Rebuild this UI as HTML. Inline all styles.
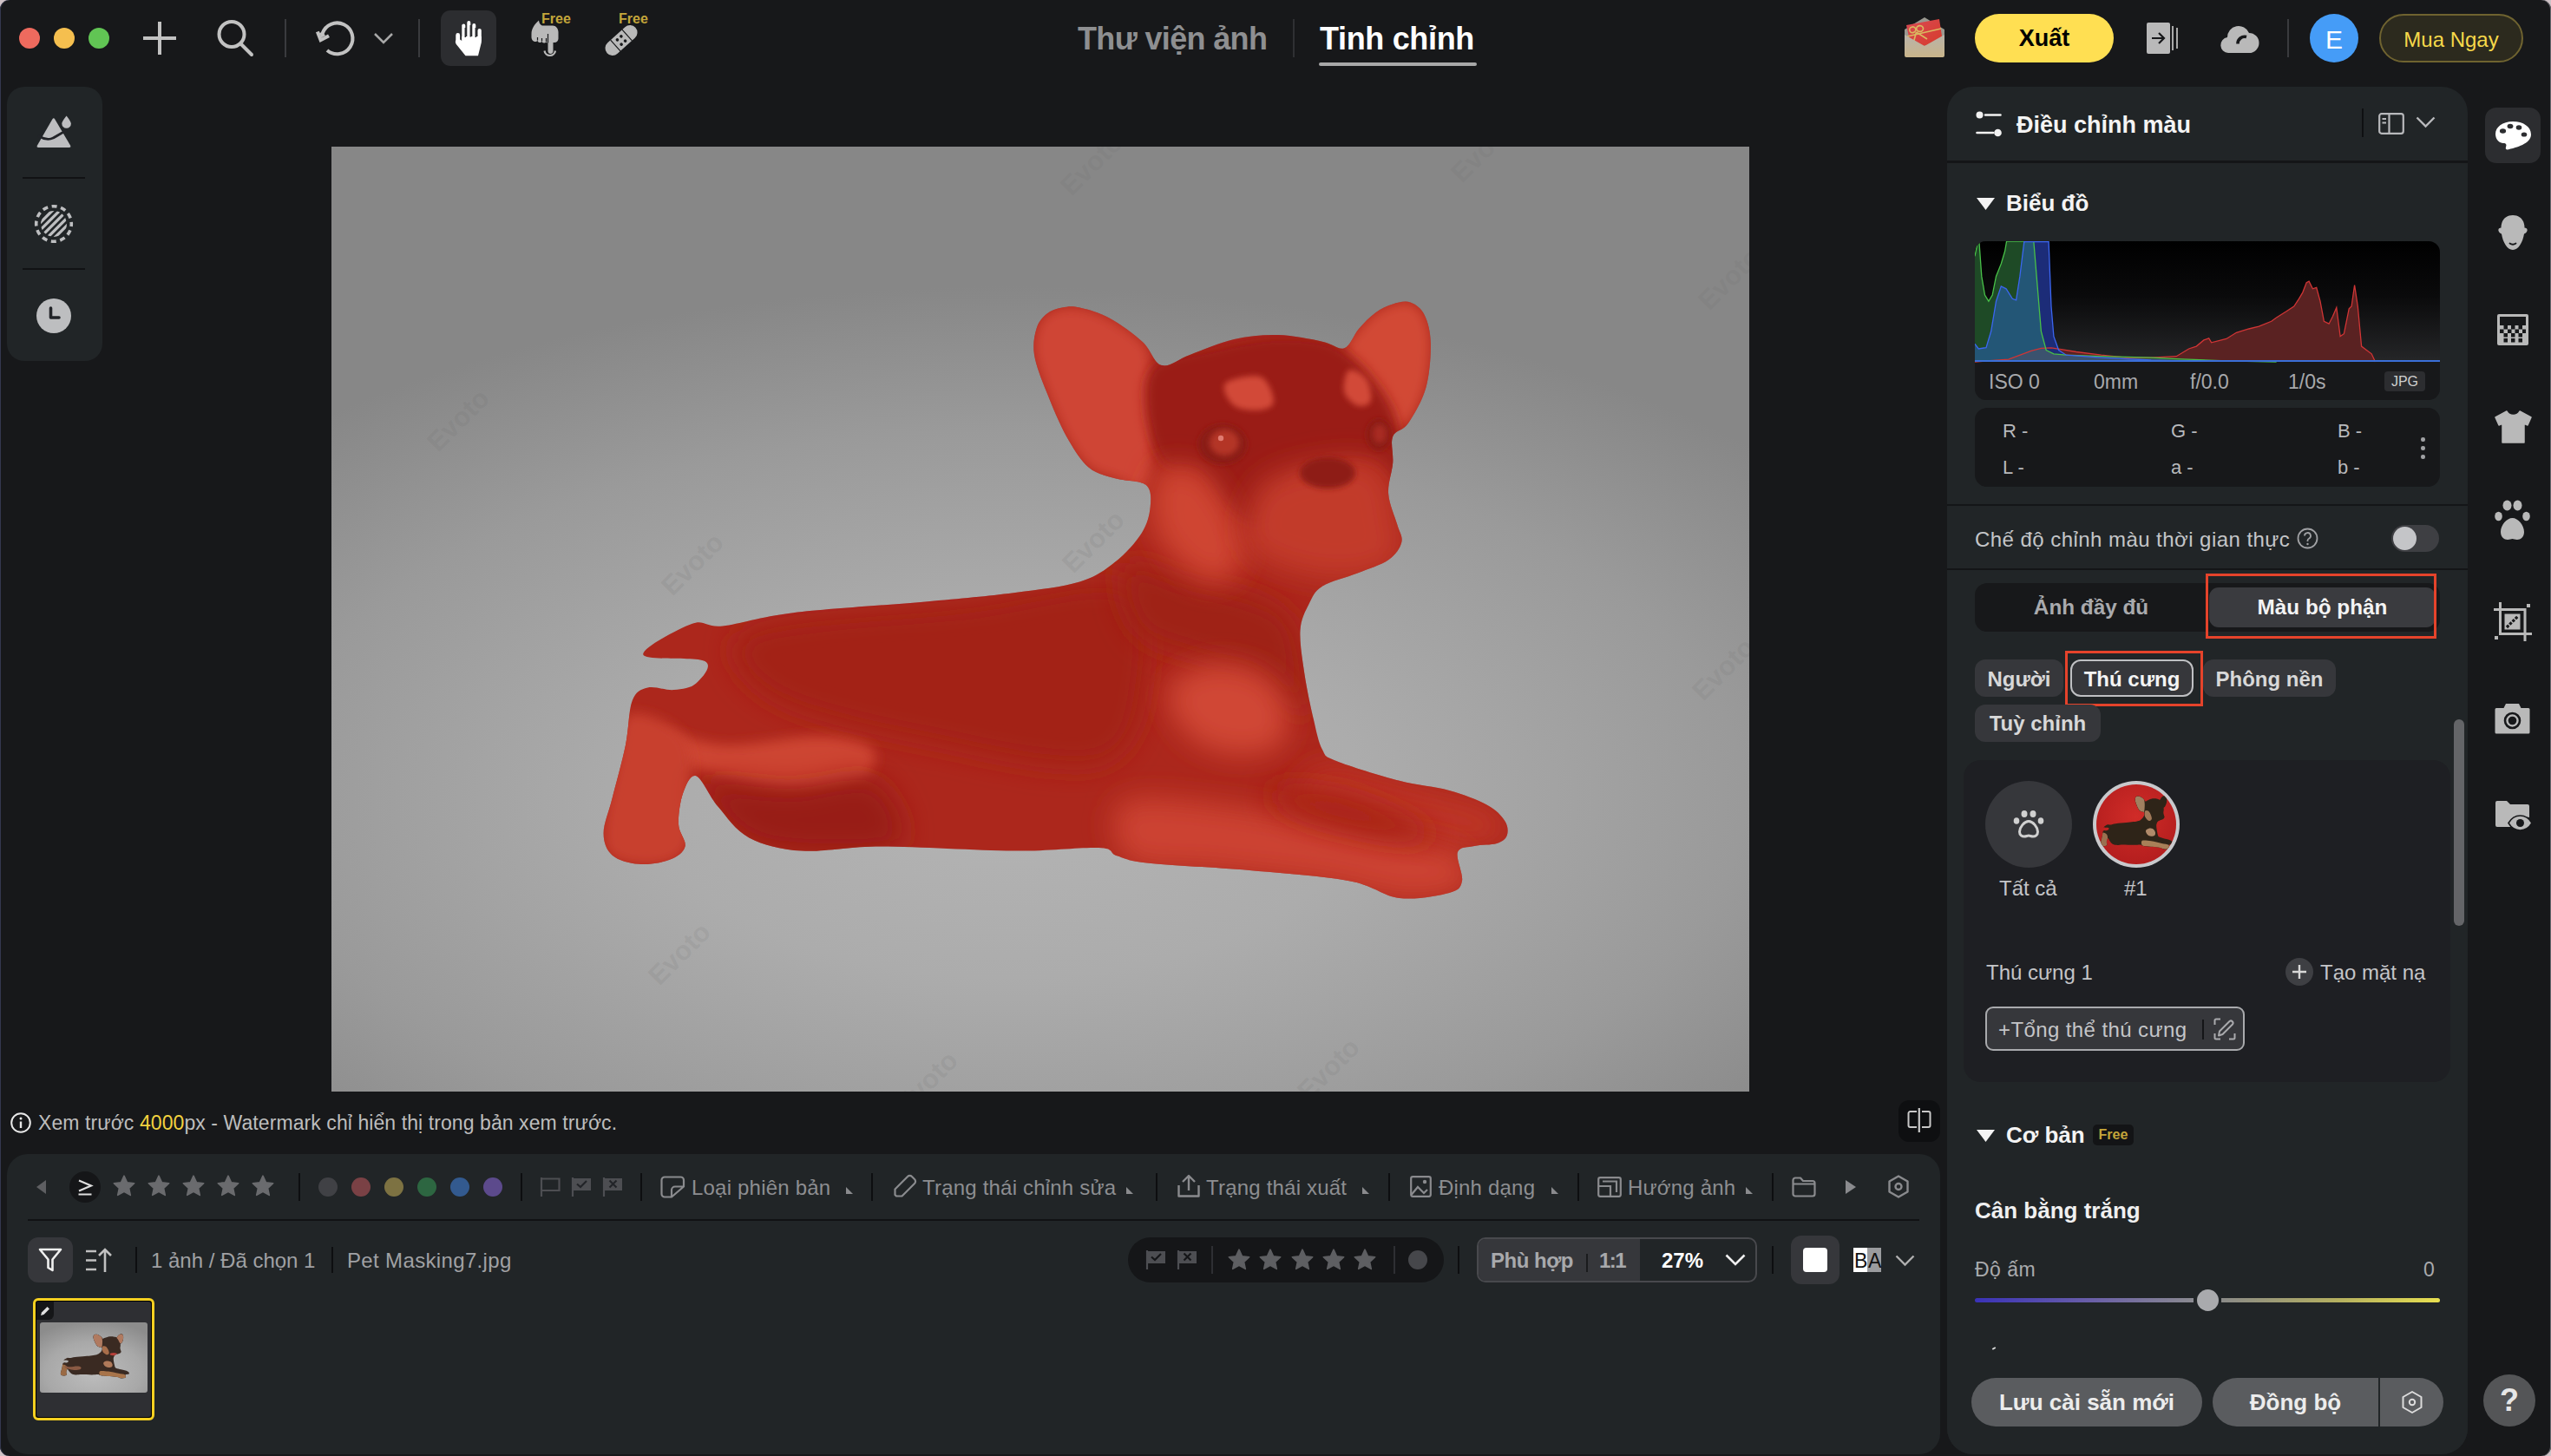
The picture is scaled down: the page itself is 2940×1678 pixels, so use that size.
<!DOCTYPE html>
<html><head><meta charset="utf-8">
<style>
*{box-sizing:border-box;margin:0;padding:0}
html,body{width:2940px;height:1678px;overflow:hidden;background:#cfc2c6}
body{position:relative;font-family:"Liberation Sans",sans-serif;color:#c8c8c8}
.a{position:absolute}
.t{position:absolute;white-space:nowrap;line-height:1}
svg{position:absolute;overflow:visible}
</style></head><body>
<div class="a" style="left:0;top:0;width:2940px;height:1678px;border-radius:11px;background:#17181a;box-shadow:inset 1px 0 0 0 #34384f,inset -1px 0 0 0 #6a6b70"></div>


<!-- ============ TOP BAR ============ -->
<div class="a" style="left:22px;top:32px;width:24px;height:24px;border-radius:50%;background:#ee6a5e"></div>
<div class="a" style="left:62px;top:32px;width:24px;height:24px;border-radius:50%;background:#f5bf4f"></div>
<div class="a" style="left:102px;top:32px;width:24px;height:24px;border-radius:50%;background:#61c554"></div>


<!-- plus -->
<svg style="left:165px;top:25px" width="38" height="38"><path d="M19 0V38M0 19H38" stroke="#c2c2c2" stroke-width="4"/></svg>
<!-- search -->
<svg style="left:247px;top:22px" width="48" height="46"><circle cx="20" cy="17.5" r="14.5" fill="none" stroke="#c2c2c2" stroke-width="4"/><path d="M31 29L43 41" stroke="#c2c2c2" stroke-width="4" stroke-linecap="round"/></svg>
<div class="a" style="left:328px;top:22px;width:2px;height:44px;background:#3a3b3e"></div>
<!-- undo -->
<svg style="left:362px;top:20px" width="50" height="48"><path d="M9.6 18.5A17.9 17.9 0 1 1 15 38" fill="none" stroke="#c2c2c2" stroke-width="4.1"/><path d="M3.9 16.6L7.6 26.2L17 21.2" fill="none" stroke="#c2c2c2" stroke-width="4.1" stroke-linejoin="miter"/><path d="M6 18L8.5 23.5L13 21L10 17Z" fill="#c2c2c2"/></svg>
<svg style="left:431px;top:38px" width="22" height="13"><path d="M1 1L11 11L21 1" fill="none" stroke="#a8a8a8" stroke-width="2.5"/></svg>
<div class="a" style="left:482px;top:22px;width:2px;height:44px;background:#3a3b3e"></div>
<!-- hand button -->
<div class="a" style="left:508px;top:12px;width:64px;height:64px;border-radius:11px;background:#2c2d30"></div>
<svg style="left:524px;top:23px" width="33" height="42" viewBox="0 0 33 42"><g fill="#fff"><rect x="8.3" y="4.4" width="4" height="20" rx="2"/><rect x="14.3" y="0.9" width="4" height="22" rx="2"/><rect x="20.3" y="3.9" width="4" height="20" rx="2"/><rect x="26.5" y="9.9" width="4.3" height="16" rx="2.1"/><path d="M8.3 19H30.8V26L27 41.2H12.5L1.8 28C0.8 26.5 0.6 25 1.3 23V17.5a2.4 2.4 0 0 1 4.8 0V22.5L8.3 24Z"/></g><path d="M12.3 9V20M18.3 6V19.5M24.3 9V20" stroke="#2c2d30" stroke-width="1.5"/></svg>
<!-- pointing hand -->
<svg style="left:612px;top:23px" width="33" height="43" viewBox="0 0 33 43"><path d="M0.5 16C0.5 10 4 5 9 0.5C9.5 4 11 6.5 14 6.5H25C28.5 6.5 31.5 10 31.5 14V21.5C31.5 24 29.5 26 27 26H25.5V36C25.5 38 24 39 22.5 39S19.5 38 19.5 36V26.5C18.5 26.5 18 26 17.5 25C17 26 16 26.5 15 26.5C13.5 26.5 12.5 25.5 12.5 24.5C12 25.5 11 26 10 26C8.5 26 7.5 25 7.5 23.5C7 24.5 6 25 5 25C3 25 0.5 23 0.5 20Z" fill="#b9b9b9"/><path d="M19.5 16V26.5M7.5 20V23.5M12.5 21V24.5M17.5 21V25" stroke="#17181a" stroke-width="1.2"/><path d="M15.5 35.5A6.3 6.3 0 0 0 28 35.5" fill="none" stroke="#b9b9b9" stroke-width="2.2"/></svg>
<div class="t" style="left:624px;top:13.5px;font-size:16px;font-weight:bold;color:#c4a63a">Free</div>
<!-- bandage -->
<svg style="left:696px;top:29px" width="40" height="35" viewBox="0 0 40 35"><g transform="rotate(-42 20 17.5)"><rect x="-2" y="9" width="44" height="17" rx="8.5" fill="#b9b9b9"/><path d="M11 9V26M29 9V26" stroke="#17181a" stroke-width="1.2"/><circle cx="17" cy="14" r="1.8" fill="#17181a"/><circle cx="23" cy="14" r="1.8" fill="#17181a"/><circle cx="17" cy="21" r="1.8" fill="#17181a"/><circle cx="23" cy="21" r="1.8" fill="#17181a"/></g></svg>
<div class="t" style="left:713px;top:13.5px;font-size:16px;font-weight:bold;color:#c4a63a">Free</div>

<!-- center tabs -->
<div class="t" style="left:1242px;top:27px;font-size:36px;letter-spacing:-0.65px;font-weight:bold;color:#8e8f91">Thư viện ảnh</div>
<div class="a" style="left:1490px;top:22px;width:2px;height:44px;background:#2f3033"></div>
<div class="t" style="left:1521px;top:27px;font-size:36px;letter-spacing:-0.33px;font-weight:bold;color:#ffffff">Tinh chỉnh</div>
<div class="a" style="left:1520px;top:72px;width:182px;height:4px;border-radius:2px;background:#a8a8a8"></div>

<!-- gift -->
<svg style="left:2193px;top:20px" width="50" height="46" viewBox="0 0 50 46">
<defs><linearGradient id="env" x1="0" y1="0" x2="0" y2="1"><stop offset="0" stop-color="#b8b3aa"/><stop offset="1" stop-color="#c9b48a"/></linearGradient>
<linearGradient id="card" x1="0" y1="0" x2="1" y2="1"><stop offset="0" stop-color="#d94a55"/><stop offset="1" stop-color="#d63a28"/></linearGradient></defs>
<path d="M2 14L25 0L48 14V44H2Z" fill="#9a9890"/>
<path d="M4 9L42 2L46 28L10 36Z" fill="url(#card)"/>
<path d="M5 22L44 13M15.5 17L12.5 28M15.5 17L28 25" stroke="#d9b860" stroke-width="1.7" fill="none"/><ellipse cx="11.3" cy="14.3" rx="3.6" ry="3.3" fill="none" stroke="#d9b860" stroke-width="1.7" transform="rotate(-20 11.3 14.3)"/><ellipse cx="19.6" cy="13" rx="3.9" ry="3.4" fill="none" stroke="#d9b860" stroke-width="1.7" transform="rotate(-10 19.6 13)"/>
<path d="M2 20L25 33L48 20V44a2 2 0 0 1-2 2H4a2 2 0 0 1-2-2Z" fill="url(#env)"/>
</svg>
<!-- Xuat -->
<div class="a" style="left:2276px;top:16px;width:160px;height:56px;border-radius:28px;background:#ffdf52"></div>
<div class="t" style="left:2276px;top:31px;width:160px;text-align:center;font-size:27px;font-weight:bold;color:#000">Xuất</div>
<!-- export icon -->
<svg style="left:2474px;top:26px" width="37" height="37" viewBox="0 0 37 37"><rect x="0" y="0" width="27" height="36" rx="2" fill="#b9b9b9"/><path d="M30 4V32M35 6V30" stroke="#b9b9b9" stroke-width="1.8"/><path d="M6 18H20M14 12L20 18L14 24" fill="none" stroke="#17181a" stroke-width="2.2"/></svg>
<!-- cloud -->
<svg style="left:2559px;top:28px" width="43" height="33" viewBox="0 0 43 33"><path d="M9 33a9 9 0 0 1-1-17.9A13 13 0 0 1 33 10a11.5 11.5 0 0 1 0 23Z" fill="#b9b9b9"/><path d="M20 22.5A8 8 0 0 1 30 14.5" fill="none" stroke="#17181a" stroke-width="3.6"/></svg>
<div class="a" style="left:2636px;top:22px;width:2px;height:44px;background:#3a3b3e"></div>
<div class="a" style="left:2662px;top:16px;width:56px;height:56px;border-radius:50%;background:#459cf7"></div>
<div class="t" style="left:2662px;top:31px;width:56px;text-align:center;font-size:30px;color:#fff">E</div>
<div class="a" style="left:2742px;top:16px;width:166px;height:56px;border-radius:28px;background:#2c2a1e;border:2px solid #6f6330"></div>
<div class="t" style="left:2742px;top:34px;width:166px;text-align:center;font-size:24px;color:#f5d84a">Mua Ngay</div>



<!-- ============ LEFT TOOL PANEL ============ -->
<div class="a" style="left:8px;top:100px;width:110px;height:316px;border-radius:20px;background:#212527"></div>
<svg style="left:42px;top:133px" width="41" height="38" viewBox="0 0 41 38"><path d="M18.3 4.5Q19.8 2 21.3 4.5L39 34.5Q40.3 37 37.5 37H2.5Q-0.3 37 1 34.5Z" fill="#bdbec0"/><path d="M3 24C7 26.5 11.5 28 16.5 27S25 21.5 34 18" fill="none" stroke="#222428" stroke-width="2.8" stroke-linecap="round"/><path d="M34.6 0.5C32 4 29.3 7.5 29.3 9.5a5.3 5.3 0 0 0 10.6 0C39.9 7.5 37.2 4 34.6 0.5Z" fill="#bdbec0"/></svg>
<div class="a" style="left:26px;top:204px;width:72px;height:2px;background:#111214"></div>
<svg style="left:40px;top:236px" width="44" height="44" viewBox="0 0 44 44"><circle cx="22" cy="22" r="20.3" fill="none" stroke="#bdbec0" stroke-width="3.6" stroke-dasharray="6.1 4.53" stroke-dashoffset="3.05"/><clipPath id="cc"><circle cx="22" cy="22" r="15"/></clipPath><g clip-path="url(#cc)" stroke="#bdbec0" stroke-width="3.3"><path d="M0 27.03L27.03 0M0 35.51L35.51 0M0 44.00L44.00 0M0 52.49L52.49 0M0 60.97L60.97 0"/></g></svg>
<div class="a" style="left:26px;top:309px;width:72px;height:2px;background:#111214"></div>
<svg style="left:42px;top:344px" width="40" height="40" viewBox="0 0 40 40"><circle cx="20" cy="20" r="20" fill="#bdbec0"/><path d="M16.5 11V22H26" fill="none" stroke="#222428" stroke-width="3.6" stroke-linecap="round" stroke-linejoin="round"/></svg>




<!-- ============ IMAGE ============ -->
<svg style="left:382px;top:169px;overflow:hidden" width="1634" height="1089" viewBox="382 169 1634 1089">
<defs>
<radialGradient id="bg" gradientUnits="userSpaceOnUse" cx="1160" cy="920" r="1180" gradientTransform="translate(1160 920) scale(1 0.5) translate(-1160 -920)">
<stop offset="0" stop-color="#b4b4b4"/><stop offset="0.35" stop-color="#acacac"/><stop offset="0.72" stop-color="#9a9a9a"/><stop offset="1" stop-color="#878787"/></radialGradient>
<filter id="bl" x="-50%" y="-50%" width="200%" height="200%"><feGaussianBlur stdDeviation="16"/></filter>
<filter id="bl2" x="-50%" y="-50%" width="200%" height="200%"><feGaussianBlur stdDeviation="7"/></filter>
<filter id="bl3" x="-50%" y="-50%" width="200%" height="200%"><feGaussianBlur stdDeviation="3"/></filter>
<clipPath id="dog"><path d="M741.3 754.5 C738.8 747.3 782.0 724.4 797.2 718.9 C812.4 713.4 813.3 723.6 832.8 721.4 C852.3 719.3 875.1 710.9 914.1 706.2 C953.0 701.5 1024.2 697.3 1066.5 693.5 C1108.9 689.7 1138.5 687.1 1168.2 683.3 C1197.8 679.5 1224.9 676.6 1244.4 670.6 C1263.9 664.7 1273.2 657.1 1285.0 647.8 C1296.9 638.4 1308.7 625.3 1315.5 614.7 C1322.3 604.1 1324.8 593.6 1325.7 584.2 C1326.5 574.9 1327.4 564.3 1320.6 558.8 C1313.8 553.3 1296.0 554.6 1285.0 551.2 C1274.0 547.8 1263.9 546.6 1254.5 538.5 C1245.2 530.5 1237.2 517.3 1229.1 502.9 C1221.1 488.5 1212.5 467.8 1206.3 452.1 C1200.1 436.5 1194.0 421.2 1192.0 408.9 C1190.1 396.6 1192.2 386.3 1194.6 378.4 C1197.0 370.6 1201.4 365.6 1206.3 361.7 C1211.2 357.7 1217.7 355.7 1224.1 354.6 C1230.4 353.4 1235.2 352.5 1244.4 354.6 C1253.5 356.6 1266.8 360.1 1278.9 366.8 C1291.0 373.4 1307.1 385.1 1317.0 394.2 C1327.0 403.3 1329.8 418.7 1338.9 421.1 C1348.0 423.6 1357.5 413.9 1371.4 408.9 C1385.3 403.9 1405.3 395.0 1422.2 391.1 C1439.2 387.3 1456.1 385.6 1473.0 386.1 C1490.0 386.5 1511.2 391.1 1523.9 393.7 C1536.6 396.2 1542.2 403.8 1549.3 401.3 C1556.3 398.8 1560.1 385.7 1566.0 378.9 C1572.0 372.2 1578.3 365.4 1584.8 360.7 C1591.4 355.9 1598.4 352.5 1605.2 350.5 C1611.9 348.5 1619.4 346.3 1625.5 348.5 C1631.6 350.6 1637.9 355.2 1641.8 363.2 C1645.7 371.2 1648.6 382.2 1648.9 396.2 C1649.1 410.2 1647.6 431.8 1643.3 447.0 C1639.0 462.3 1629.3 478.4 1623.0 487.7 C1616.6 497.0 1608.1 495.3 1605.2 502.9 C1602.2 510.6 1606.0 522.4 1605.2 533.4 C1604.3 544.4 1599.2 557.1 1600.1 569.0 C1600.9 580.9 1607.7 595.3 1610.3 604.6 C1612.8 613.9 1617.0 618.1 1615.3 624.9 C1613.6 631.7 1608.6 639.3 1600.1 645.2 C1591.6 651.1 1577.2 655.4 1564.5 660.5 C1551.8 665.5 1533.2 669.8 1523.9 675.7 C1514.5 681.6 1512.9 687.6 1508.6 696.0 C1504.4 704.5 1499.3 713.0 1498.5 726.5 C1497.6 740.1 1501.0 760.4 1503.5 777.3 C1506.1 794.3 1510.3 813.8 1513.7 828.2 C1517.1 842.6 1519.5 855.6 1523.9 863.7 C1528.3 871.9 1525.3 870.9 1540.1 876.9 C1554.9 883.0 1591.1 894.1 1612.8 899.8 C1634.5 905.5 1653.4 906.3 1670.2 911.0 C1687.1 915.6 1703.2 921.9 1713.9 927.8 C1724.6 933.6 1730.4 940.2 1734.2 946.0 C1738.1 951.9 1738.3 958.5 1736.8 962.8 C1735.3 967.1 1731.4 969.9 1725.1 972.0 C1718.8 974.0 1706.7 973.3 1699.2 975.0 C1691.6 976.7 1682.2 975.4 1679.9 982.1 C1677.5 988.8 1686.6 1007.4 1685.0 1015.2 C1683.3 1022.9 1682.2 1025.6 1670.2 1028.9 C1658.2 1032.2 1632.0 1037.3 1612.8 1035.0 C1593.6 1032.7 1583.7 1020.5 1554.9 1015.2 C1526.1 1009.8 1478.5 1006.3 1440.0 1003.0 C1401.6 999.6 1349.7 997.6 1324.2 994.8 C1298.7 992.0 1296.7 989.2 1287.1 986.2 C1277.4 983.2 1286.0 978.0 1266.2 977.0 C1246.4 976.1 1209.9 980.9 1168.2 980.6 C1126.4 980.3 1056.4 975.5 1015.7 975.5 C975.1 975.5 949.6 982.3 924.2 980.6 C898.8 978.9 879.4 973.8 863.3 965.4 C847.2 956.9 837.9 941.6 827.7 929.8 C817.5 917.9 809.1 896.8 802.3 894.2 C795.5 891.7 790.4 905.2 787.0 914.5 C783.7 923.9 781.5 940.0 782.0 950.1 C782.4 960.3 791.3 968.7 789.6 975.5 C787.9 982.3 780.7 987.4 771.8 990.8 C762.9 994.2 747.2 996.7 736.2 995.8 C725.2 995.0 712.5 991.6 705.7 985.7 C699.0 979.8 695.6 971.3 695.6 960.3 C695.6 949.3 701.5 936.6 705.7 919.6 C710.0 902.7 717.2 877.3 721.0 858.6 C724.8 840.0 724.4 818.8 728.6 807.8 C732.8 796.8 738.3 794.7 746.4 792.6 C754.4 790.5 767.6 796.0 776.9 795.1 C786.2 794.3 796.4 793.0 802.3 787.5 C808.2 782.0 822.6 767.6 812.4 762.1 C802.3 756.6 743.8 761.7 741.3 754.5Z"/></clipPath>
</defs>
<rect x="382" y="169" width="1634" height="1089" fill="url(#bg)"/>
<g font-family="Liberation Sans" font-weight="bold" font-size="31" fill="#6a6a6a" fill-opacity="0.15">
<text transform="translate(505,522) rotate(-45)">Evoto</text>
<text transform="translate(775,688) rotate(-45)">Evoto</text>
<text transform="translate(1237,662) rotate(-45)">Evoto</text>
<text transform="translate(1235,227) rotate(-45)">Evoto</text>
<text transform="translate(1970,359) rotate(-45)">Evoto</text>
<text transform="translate(1963,809) rotate(-45)">Evoto</text>
<text transform="translate(760,1137) rotate(-45)">Evoto</text>
<text transform="translate(1045,1285) rotate(-45)">Evoto</text>
<text transform="translate(1508,1270) rotate(-45)">Evoto</text>
<text transform="translate(1685,212) rotate(-45)">Evoto</text>
</g>
<defs><path id="dogp" d="M741.3 754.5 C738.8 747.3 782.0 724.4 797.2 718.9 C812.4 713.4 813.3 723.6 832.8 721.4 C852.3 719.3 875.1 710.9 914.1 706.2 C953.0 701.5 1024.2 697.3 1066.5 693.5 C1108.9 689.7 1138.5 687.1 1168.2 683.3 C1197.8 679.5 1224.9 676.6 1244.4 670.6 C1263.9 664.7 1273.2 657.1 1285.0 647.8 C1296.9 638.4 1308.7 625.3 1315.5 614.7 C1322.3 604.1 1324.8 593.6 1325.7 584.2 C1326.5 574.9 1327.4 564.3 1320.6 558.8 C1313.8 553.3 1296.0 554.6 1285.0 551.2 C1274.0 547.8 1263.9 546.6 1254.5 538.5 C1245.2 530.5 1237.2 517.3 1229.1 502.9 C1221.1 488.5 1212.5 467.8 1206.3 452.1 C1200.1 436.5 1194.0 421.2 1192.0 408.9 C1190.1 396.6 1192.2 386.3 1194.6 378.4 C1197.0 370.6 1201.4 365.6 1206.3 361.7 C1211.2 357.7 1217.7 355.7 1224.1 354.6 C1230.4 353.4 1235.2 352.5 1244.4 354.6 C1253.5 356.6 1266.8 360.1 1278.9 366.8 C1291.0 373.4 1307.1 385.1 1317.0 394.2 C1327.0 403.3 1329.8 418.7 1338.9 421.1 C1348.0 423.6 1357.5 413.9 1371.4 408.9 C1385.3 403.9 1405.3 395.0 1422.2 391.1 C1439.2 387.3 1456.1 385.6 1473.0 386.1 C1490.0 386.5 1511.2 391.1 1523.9 393.7 C1536.6 396.2 1542.2 403.8 1549.3 401.3 C1556.3 398.8 1560.1 385.7 1566.0 378.9 C1572.0 372.2 1578.3 365.4 1584.8 360.7 C1591.4 355.9 1598.4 352.5 1605.2 350.5 C1611.9 348.5 1619.4 346.3 1625.5 348.5 C1631.6 350.6 1637.9 355.2 1641.8 363.2 C1645.7 371.2 1648.6 382.2 1648.9 396.2 C1649.1 410.2 1647.6 431.8 1643.3 447.0 C1639.0 462.3 1629.3 478.4 1623.0 487.7 C1616.6 497.0 1608.1 495.3 1605.2 502.9 C1602.2 510.6 1606.0 522.4 1605.2 533.4 C1604.3 544.4 1599.2 557.1 1600.1 569.0 C1600.9 580.9 1607.7 595.3 1610.3 604.6 C1612.8 613.9 1617.0 618.1 1615.3 624.9 C1613.6 631.7 1608.6 639.3 1600.1 645.2 C1591.6 651.1 1577.2 655.4 1564.5 660.5 C1551.8 665.5 1533.2 669.8 1523.9 675.7 C1514.5 681.6 1512.9 687.6 1508.6 696.0 C1504.4 704.5 1499.3 713.0 1498.5 726.5 C1497.6 740.1 1501.0 760.4 1503.5 777.3 C1506.1 794.3 1510.3 813.8 1513.7 828.2 C1517.1 842.6 1519.5 855.6 1523.9 863.7 C1528.3 871.9 1525.3 870.9 1540.1 876.9 C1554.9 883.0 1591.1 894.1 1612.8 899.8 C1634.5 905.5 1653.4 906.3 1670.2 911.0 C1687.1 915.6 1703.2 921.9 1713.9 927.8 C1724.6 933.6 1730.4 940.2 1734.2 946.0 C1738.1 951.9 1738.3 958.5 1736.8 962.8 C1735.3 967.1 1731.4 969.9 1725.1 972.0 C1718.8 974.0 1706.7 973.3 1699.2 975.0 C1691.6 976.7 1682.2 975.4 1679.9 982.1 C1677.5 988.8 1686.6 1007.4 1685.0 1015.2 C1683.3 1022.9 1682.2 1025.6 1670.2 1028.9 C1658.2 1032.2 1632.0 1037.3 1612.8 1035.0 C1593.6 1032.7 1583.7 1020.5 1554.9 1015.2 C1526.1 1009.8 1478.5 1006.3 1440.0 1003.0 C1401.6 999.6 1349.7 997.6 1324.2 994.8 C1298.7 992.0 1296.7 989.2 1287.1 986.2 C1277.4 983.2 1286.0 978.0 1266.2 977.0 C1246.4 976.1 1209.9 980.9 1168.2 980.6 C1126.4 980.3 1056.4 975.5 1015.7 975.5 C975.1 975.5 949.6 982.3 924.2 980.6 C898.8 978.9 879.4 973.8 863.3 965.4 C847.2 956.9 837.9 941.6 827.7 929.8 C817.5 917.9 809.1 896.8 802.3 894.2 C795.5 891.7 790.4 905.2 787.0 914.5 C783.7 923.9 781.5 940.0 782.0 950.1 C782.4 960.3 791.3 968.7 789.6 975.5 C787.9 982.3 780.7 987.4 771.8 990.8 C762.9 994.2 747.2 996.7 736.2 995.8 C725.2 995.0 712.5 991.6 705.7 985.7 C699.0 979.8 695.6 971.3 695.6 960.3 C695.6 949.3 701.5 936.6 705.7 919.6 C710.0 902.7 717.2 877.3 721.0 858.6 C724.8 840.0 724.4 818.8 728.6 807.8 C732.8 796.8 738.3 794.7 746.4 792.6 C754.4 790.5 767.6 796.0 776.9 795.1 C786.2 794.3 796.4 793.0 802.3 787.5 C808.2 782.0 822.6 767.6 812.4 762.1 C802.3 756.6 743.8 761.7 741.3 754.5Z"/></defs><use href="#dogp" fill="#ac271c"/>
<g clip-path="url(#dog)">
<path d="M863.3 726.5 C901.4 708.7 1045.4 704.5 1117.3 696.0 C1189.3 687.6 1261.3 662.2 1295.2 675.7 C1329.1 689.3 1324.8 743.5 1320.6 777.3 C1316.4 811.2 1312.1 866.3 1269.8 879.0 C1227.4 891.7 1130.0 866.3 1066.5 853.6 C1003.0 840.9 922.5 823.9 888.7 802.7 C854.8 781.6 825.2 744.3 863.3 726.5Z" fill="#a32118" filter="url(#bl)"/>
<path d="M1295.2 650.3 C1305.4 641.0 1345.2 663.9 1371.4 670.6 C1397.7 677.4 1432.4 681.6 1452.7 691.0 C1473.0 700.3 1484.9 703.7 1493.4 726.5 C1501.8 749.4 1510.3 819.7 1503.5 828.2 C1496.8 836.6 1473.0 789.2 1452.7 777.3 C1432.4 765.5 1405.3 765.5 1381.6 757.0 C1357.9 748.5 1324.8 744.3 1310.4 726.5 C1296.0 708.7 1285.0 659.6 1295.2 650.3Z" fill="#9f2017" filter="url(#bl)"/>
<path d="M1192.0 408.9 C1190.1 396.6 1192.2 386.3 1194.6 378.4 C1197.0 370.6 1201.4 365.6 1206.3 361.7 C1211.2 357.7 1217.7 355.7 1224.1 354.6 C1230.4 353.4 1235.2 352.5 1244.4 354.6 C1253.5 356.6 1266.8 360.1 1278.9 366.8 C1291.0 373.4 1309.3 385.9 1317.0 394.2 C1324.8 402.5 1323.4 403.5 1325.7 416.5 C1328.0 429.6 1331.6 448.7 1330.8 472.4 C1329.9 496.2 1328.2 545.7 1320.6 558.8 C1313.0 572.0 1296.0 554.6 1285.0 551.2 C1274.0 547.8 1263.9 546.6 1254.5 538.5 C1245.2 530.5 1237.2 517.3 1229.1 502.9 C1221.1 488.5 1212.5 467.8 1206.3 452.1 C1200.1 436.5 1194.0 421.2 1192.0 408.9Z" fill="#cf4534" filter="url(#bl2)"/>
<path d="M1549.3 406.4 C1548.7 396.7 1560.1 386.6 1566.0 378.9 C1572.0 371.3 1578.3 365.4 1584.8 360.7 C1591.4 355.9 1598.4 352.5 1605.2 350.5 C1611.9 348.5 1619.4 346.3 1625.5 348.5 C1631.6 350.6 1637.9 355.2 1641.8 363.2 C1645.7 371.2 1648.6 382.2 1648.9 396.2 C1649.1 410.2 1647.6 431.8 1643.3 447.0 C1639.0 462.3 1630.2 480.1 1623.0 487.7 C1615.8 495.3 1609.0 501.2 1600.1 492.8 C1591.2 484.3 1578.1 451.3 1569.6 436.9 C1561.1 422.5 1549.9 416.0 1549.3 406.4Z" fill="#d24836" filter="url(#bl2)"/>
<path d="M1330.8 421.6 C1343.5 409.8 1373.1 406.8 1396.8 401.3 C1420.5 395.8 1448.5 388.6 1473.0 388.6 C1497.6 388.6 1522.2 387.3 1544.2 401.3 C1566.2 415.3 1593.3 445.3 1605.2 472.4 C1617.0 499.5 1618.7 553.8 1615.3 563.9 C1611.9 574.1 1600.1 538.5 1584.8 533.4 C1569.6 528.3 1540.8 529.2 1523.9 533.4 C1506.9 537.7 1495.1 547.0 1483.2 558.8 C1471.4 570.7 1464.6 600.3 1452.7 604.6 C1440.9 608.8 1423.9 594.4 1412.1 584.2 C1400.2 574.1 1393.4 552.1 1381.6 543.6 C1369.7 535.1 1351.1 545.3 1340.9 533.4 C1330.8 521.6 1322.3 491.1 1320.6 472.4 C1318.9 453.8 1318.1 433.5 1330.8 421.6Z" fill="#9a1d15" filter="url(#bl2)"/>
<path d="M1335.8 543.6 C1344.3 533.4 1368.0 536.0 1381.6 543.6 C1395.1 551.2 1408.7 572.4 1417.2 589.3 C1425.6 606.3 1434.9 631.7 1432.4 645.2 C1429.9 658.8 1413.8 669.8 1401.9 670.6 C1390.1 671.5 1373.1 661.3 1361.3 650.3 C1349.4 639.3 1335.0 622.4 1330.8 604.6 C1326.5 586.8 1327.4 553.8 1335.8 543.6Z" fill="#cf4533" filter="url(#bl)"/>
<path d="M1452.7 558.8 C1467.1 543.6 1501.0 536.8 1523.9 533.4 C1546.7 530.0 1575.5 526.7 1589.9 538.5 C1604.3 550.4 1606.9 586.8 1610.3 604.6 C1613.6 622.4 1619.6 635.1 1610.3 645.2 C1600.9 655.4 1575.5 663.9 1554.4 665.5 C1533.2 667.2 1502.7 662.2 1483.2 655.4 C1463.7 648.6 1442.6 641.0 1437.5 624.9 C1432.4 608.8 1438.3 574.1 1452.7 558.8Z" fill="#c23a2a" filter="url(#bl)"/>
<path d="M1412.1 442.0 C1417.2 436.5 1443.4 430.9 1452.7 434.3 C1462.0 437.7 1468.0 455.9 1468.0 462.3 C1468.0 468.6 1460.3 471.6 1452.7 472.4 C1445.1 473.3 1429.0 472.4 1422.2 467.4 C1415.5 462.3 1407.0 447.5 1412.1 442.0Z" fill="#d24a38" filter="url(#bl3)"/>
<path d="M1554.4 426.7 C1558.6 424.2 1570.4 430.9 1574.7 436.9 C1578.9 442.8 1581.5 457.2 1579.8 462.3 C1578.1 467.4 1569.6 469.1 1564.5 467.4 C1559.4 465.7 1551.0 458.9 1549.3 452.1 C1547.6 445.3 1550.1 429.3 1554.4 426.7Z" fill="#d24a38" filter="url(#bl3)"/>
<path d="M1346.0 797.7 C1349.4 784.1 1374.0 770.6 1391.7 767.2 C1409.5 763.8 1437.5 768.9 1452.7 777.3 C1468.0 785.8 1479.8 804.4 1483.2 818.0 C1486.6 831.5 1483.2 850.2 1473.0 858.6 C1462.9 867.1 1439.2 870.5 1422.2 868.8 C1405.3 867.1 1384.1 860.3 1371.4 848.5 C1358.7 836.6 1342.6 811.2 1346.0 797.7Z" fill="#d04634" filter="url(#bl)"/>
<path d="M761.6 843.4 C772.6 840.9 807.4 857.8 837.9 858.6 C868.3 859.5 916.6 847.6 944.6 848.5 C972.5 849.3 997.9 855.3 1005.5 863.7 C1013.2 872.2 1007.2 891.7 990.3 899.3 C973.4 906.9 933.6 911.2 903.9 909.5 C874.3 907.8 834.5 895.1 812.4 889.1 C790.4 883.2 780.3 881.5 771.8 873.9 C763.3 866.3 750.6 845.9 761.6 843.4Z" fill="#cd4432" filter="url(#bl2)"/>
<path d="M726.1 823.1 C738.8 818.0 775.2 833.2 787.0 848.5 C798.9 863.7 796.4 893.4 797.2 914.5 C798.0 935.7 798.0 962.0 792.1 975.5 C786.2 989.1 775.2 993.3 761.6 995.8 C748.1 998.4 721.8 996.7 710.8 990.8 C699.8 984.8 695.6 978.9 695.6 960.3 C695.6 941.6 705.7 901.8 710.8 879.0 C715.9 856.1 713.4 828.2 726.1 823.1Z" fill="#c83f2e" filter="url(#bl2)"/>
<path d="M812.4 904.4 C826.0 898.5 881.9 910.3 914.1 909.5 C946.3 908.6 984.4 891.7 1005.5 899.3 C1026.7 906.9 1039.4 941.6 1041.1 955.2 C1042.8 968.7 1041.1 976.8 1015.7 980.6 C990.3 984.4 919.2 984.0 888.7 978.1 C858.2 972.1 845.5 957.3 832.8 945.0 C820.1 932.8 798.9 910.3 812.4 904.4Z" fill="#981c14" filter="url(#bl)"/>
<path d="M1523.9 884.1 C1545.0 879.8 1593.3 896.8 1625.5 904.4 C1657.7 912.0 1698.3 920.5 1717.0 929.8 C1735.6 939.1 1740.7 952.7 1737.3 960.3 C1733.9 967.9 1719.5 977.2 1696.6 975.5 C1673.8 973.8 1633.1 957.7 1600.1 950.1 C1567.1 942.5 1511.2 940.8 1498.5 929.8 C1485.8 918.8 1502.7 888.3 1523.9 884.1Z" fill="#bd3425" filter="url(#bl)"/>
<path d="M1295.2 924.7 C1315.5 914.5 1375.7 923.9 1422.2 929.8 C1468.8 935.7 1532.3 951.8 1574.7 960.3 C1617.0 968.7 1656.8 970.4 1676.3 980.6 C1695.8 990.8 1700.0 1011.9 1691.6 1021.3 C1683.1 1030.6 1653.4 1037.3 1625.5 1036.5 C1597.5 1035.7 1562.0 1022.1 1523.9 1016.2 C1485.8 1010.2 1434.1 1005.2 1396.8 1000.9 C1359.6 996.7 1317.2 1003.5 1300.3 990.8 C1283.3 978.1 1274.9 934.9 1295.2 924.7Z" fill="#cc4230" filter="url(#bl)"/>
<path d="M1462.9 909.5 C1471.4 905.2 1517.9 906.1 1549.3 914.5 C1580.6 923.0 1642.4 951.8 1650.9 960.3 C1659.4 968.7 1625.5 968.7 1600.1 965.4 C1574.7 962.0 1521.3 949.3 1498.5 940.0 C1475.6 930.6 1454.4 913.7 1462.9 909.5Z" fill="#a82419" filter="url(#bl)"/>
<ellipse cx="1409" cy="512" rx="28" ry="23" fill="#8a1a12" filter="url(#bl3)"/><ellipse cx="1411" cy="510" rx="17" ry="15" fill="#b43426" filter="url(#bl3)"/><circle cx="1407" cy="505" r="3.2" fill="#e07a70"/>
<ellipse cx="1589" cy="501" rx="14" ry="18" fill="#8a1a12" filter="url(#bl3)"/><ellipse cx="1590" cy="500" rx="8" ry="11" fill="#a82c20" filter="url(#bl3)"/>
<ellipse cx="1530" cy="545" rx="32" ry="18" fill="#8e1b13" filter="url(#bl3)"/>
</g>
</svg>
<!-- info -->
<svg style="left:12px;top:1282px" width="24" height="24" viewBox="0 0 24 24"><circle cx="12" cy="12" r="10.8" fill="none" stroke="#e8e8e8" stroke-width="2"/><circle cx="12" cy="7" r="1.5" fill="#e8e8e8"/><path d="M12 10.5V18" stroke="#e8e8e8" stroke-width="2.4"/></svg>
<div class="t" style="left:44px;top:1283px;font-size:23px;letter-spacing:0.08px;color:#bdbdbd">Xem trước <span style="color:#f3d23f">4000</span>px - Watermark chỉ hiển thị trong bản xem trước.</div>
<!-- compare btn -->
<div class="a" style="left:2188px;top:1268px;width:48px;height:48px;border-radius:12px;background:#0e0f11"></div>
<svg style="left:2198px;top:1277px" width="28" height="30" viewBox="0 0 28 30"><path d="M11 4H3.5a2 2 0 0 0-2 2V20a2 2 0 0 0 2 2H11M17 4h7.5a2 2 0 0 1 2 2V20a2 2 0 0 1-2 2H17" fill="none" stroke="#c8c8c8" stroke-width="2"/><path d="M13.8 0V28" stroke="#c8c8c8" stroke-width="2.2"/></svg>


<!-- ============ BOTTOM PANEL ============ -->
<div class="a" style="left:8px;top:1330px;width:2228px;height:346px;border-radius:24px;background:#212527"></div>
<svg style="left:42px;top:1360px" width="11" height="16" viewBox="0 0 11 16"><path d="M11 0V16L0 8Z" fill="#5e5f62"/></svg>
<div class="a" style="left:80px;top:1350px;width:36px;height:36px;border-radius:50%;background:#151618"></div>
<svg style="left:89px;top:1359px" width="18" height="19" viewBox="0 0 18 19"><path d="M2 1.5L16 7.5L2 13.5M1.5 17.5H16.5" fill="none" stroke="#e0e0e0" stroke-width="2.2"/></svg>
<svg style="left:130px;top:1354px" width="26" height="25" viewBox="0 0 26 25"><path d="M13 1.2l3.5 7.6 8.2.9-6.1 5.6 1.7 8.1L13 19.3l-7.3 4.1 1.7-8.1L1.3 9.7l8.2-.9z" fill="#6a6b6e" stroke="#6a6b6e" stroke-width="1.6" stroke-linejoin="round"/></svg>
<svg style="left:170px;top:1354px" width="26" height="25" viewBox="0 0 26 25"><path d="M13 1.2l3.5 7.6 8.2.9-6.1 5.6 1.7 8.1L13 19.3l-7.3 4.1 1.7-8.1L1.3 9.7l8.2-.9z" fill="#6a6b6e" stroke="#6a6b6e" stroke-width="1.6" stroke-linejoin="round"/></svg>
<svg style="left:210px;top:1354px" width="26" height="25" viewBox="0 0 26 25"><path d="M13 1.2l3.5 7.6 8.2.9-6.1 5.6 1.7 8.1L13 19.3l-7.3 4.1 1.7-8.1L1.3 9.7l8.2-.9z" fill="#6a6b6e" stroke="#6a6b6e" stroke-width="1.6" stroke-linejoin="round"/></svg>
<svg style="left:250px;top:1354px" width="26" height="25" viewBox="0 0 26 25"><path d="M13 1.2l3.5 7.6 8.2.9-6.1 5.6 1.7 8.1L13 19.3l-7.3 4.1 1.7-8.1L1.3 9.7l8.2-.9z" fill="#6a6b6e" stroke="#6a6b6e" stroke-width="1.6" stroke-linejoin="round"/></svg>
<svg style="left:290px;top:1354px" width="26" height="25" viewBox="0 0 26 25"><path d="M13 1.2l3.5 7.6 8.2.9-6.1 5.6 1.7 8.1L13 19.3l-7.3 4.1 1.7-8.1L1.3 9.7l8.2-.9z" fill="#6a6b6e" stroke="#6a6b6e" stroke-width="1.6" stroke-linejoin="round"/></svg>
<div class="a" style="left:344px;top:1352px;width:2px;height:32px;background:#0d0e10"></div><div class="a" style="left:367px;top:1357px;width:22px;height:22px;border-radius:50%;background:#404145"></div>
<div class="a" style="left:405px;top:1357px;width:22px;height:22px;border-radius:50%;background:#7a4145"></div>
<div class="a" style="left:443px;top:1357px;width:22px;height:22px;border-radius:50%;background:#7d7242"></div>
<div class="a" style="left:481px;top:1357px;width:22px;height:22px;border-radius:50%;background:#2d6641"></div>
<div class="a" style="left:519px;top:1357px;width:22px;height:22px;border-radius:50%;background:#335a8f"></div>
<div class="a" style="left:557px;top:1357px;width:22px;height:22px;border-radius:50%;background:#5c4a8c"></div>
<div class="a" style="left:600px;top:1352px;width:2px;height:32px;background:#0d0e10"></div><svg style="left:622px;top:1356px" width="24" height="24" viewBox="0 0 24 24"><path d="M2 23V1M2 2.5H22.5V16H2" fill="none" stroke="#4d4e52" stroke-width="2.2"/></svg>
<svg style="left:658px;top:1356px" width="24" height="24" viewBox="0 0 24 24"><path d="M2 23V1" stroke="#4d4e52" stroke-width="2.2"/><rect x="2" y="2" width="21" height="14" fill="#4d4e52"/><path d="M7 8.5L11 12L18 5" fill="none" stroke="#222428" stroke-width="2.2"/></svg>
<svg style="left:694px;top:1356px" width="24" height="24" viewBox="0 0 24 24"><path d="M2 23V1" stroke="#4d4e52" stroke-width="2.2"/><rect x="2" y="2" width="21" height="14" fill="#4d4e52"/><path d="M8.5 4.5L16.5 12.5M16.5 4.5L8.5 12.5" fill="none" stroke="#222428" stroke-width="2.2"/></svg>
<div class="a" style="left:738px;top:1352px;width:2px;height:32px;background:#0d0e10"></div><svg style="left:761px;top:1355px" width="29" height="26" viewBox="0 0 29 26"><path d="M13 24.5H5a3.5 3.5 0 0 1-3.5-3.5V5A3.5 3.5 0 0 1 5 1.5H23.5A3.5 3.5 0 0 1 27 5V12.5ZM27 12.5H17a4 4 0 0 0-4 4V24.5" fill="none" stroke="#8a8b8e" stroke-width="2.2" stroke-linejoin="round"/></svg>
<div class="t" style="left:797px;top:1357px;font-size:24px;letter-spacing:0.2px;color:#8d8e91">Loại phiên bản</div><svg style="left:975px;top:1368px" width="9" height="9" viewBox="0 0 9 9"><path d="M0 0V8H8Z" fill="#8a8b8e"/></svg><div class="a" style="left:1004px;top:1352px;width:2px;height:32px;background:#0d0e10"></div><svg style="left:1030px;top:1354px" width="26" height="26" viewBox="0 0 26 26"><path d="M3 24.5H9.5L24 10a3.5 3.5 0 0 0 0-5L21 2a3.5 3.5 0 0 0-5 0L1.5 16.5V23Z" fill="none" stroke="#8a8b8e" stroke-width="2.2" stroke-linejoin="round"/></svg>
<div class="t" style="left:1063px;top:1357px;font-size:24px;letter-spacing:0.2px;color:#8d8e91">Trạng thái chỉnh sửa</div><svg style="left:1298px;top:1368px" width="9" height="9" viewBox="0 0 9 9"><path d="M0 0V8H8Z" fill="#8a8b8e"/></svg><div class="a" style="left:1332px;top:1352px;width:2px;height:32px;background:#0d0e10"></div><svg style="left:1357px;top:1353px" width="26" height="27" viewBox="0 0 26 27"><path d="M1.5 13V25.5H24.5V13M13 19V2M6 9L13 2L20 9" fill="none" stroke="#8a8b8e" stroke-width="2.4" stroke-linejoin="round"/></svg>
<div class="t" style="left:1390px;top:1357px;font-size:24px;letter-spacing:0.2px;color:#8d8e91">Trạng thái xuất</div><svg style="left:1570px;top:1368px" width="9" height="9" viewBox="0 0 9 9"><path d="M0 0V8H8Z" fill="#8a8b8e"/></svg><div class="a" style="left:1600px;top:1352px;width:2px;height:32px;background:#0d0e10"></div><svg style="left:1625px;top:1355px" width="25" height="25" viewBox="0 0 25 25"><rect x="1.2" y="1.2" width="22.6" height="22.6" rx="2" fill="none" stroke="#8a8b8e" stroke-width="2.2"/><path d="M1.5 22L9 13L16 20L20 16" fill="none" stroke="#8a8b8e" stroke-width="2.2"/><circle cx="17" cy="7" r="2.2" fill="#8a8b8e"/></svg>
<div class="t" style="left:1658px;top:1357px;font-size:24px;letter-spacing:0.2px;color:#8d8e91">Định dạng</div><svg style="left:1788px;top:1368px" width="9" height="9" viewBox="0 0 9 9"><path d="M0 0V8H8Z" fill="#8a8b8e"/></svg><div class="a" style="left:1818px;top:1352px;width:2px;height:32px;background:#0d0e10"></div><svg style="left:1841px;top:1356px" width="28" height="24" viewBox="0 0 28 24"><rect x="1.2" y="1.2" width="25.6" height="21.6" rx="2" fill="none" stroke="#8a8b8e" stroke-width="2.2"/><path d="M1.5 11H15V22.5" fill="none" stroke="#8a8b8e" stroke-width="2.2"/><path d="M6 5.5H22V18" fill="none" stroke="#8a8b8e" stroke-width="2.2"/></svg>
<div class="t" style="left:1876px;top:1357px;font-size:24px;letter-spacing:0.2px;color:#8d8e91">Hướng ảnh</div><svg style="left:2012px;top:1368px" width="9" height="9" viewBox="0 0 9 9"><path d="M0 0V8H8Z" fill="#8a8b8e"/></svg><div class="a" style="left:2042px;top:1352px;width:2px;height:32px;background:#0d0e10"></div><svg style="left:2065px;top:1356px" width="28" height="24" viewBox="0 0 28 24"><path d="M1.5 4a2.5 2.5 0 0 1 2.5-2.5H10L13 5H24a2.5 2.5 0 0 1 2.5 2.5V20a2.5 2.5 0 0 1-2.5 2.5H4A2.5 2.5 0 0 1 1.5 20Z M1.5 8.5H26.5" fill="none" stroke="#8a8b8e" stroke-width="2.2" stroke-linejoin="round"/></svg>
<svg style="left:2127px;top:1360px" width="12" height="16" viewBox="0 0 12 16"><path d="M0 0V16L12 8Z" fill="#8a8b8e"/></svg>
<svg style="left:2175px;top:1354px" width="26" height="27" viewBox="0 0 26 27"><path d="M13 1.5L23.5 7.5V19.5L13 25.5L2.5 19.5V7.5Z" fill="none" stroke="#8a8b8e" stroke-width="2.4" stroke-linejoin="round"/><circle cx="13" cy="13.5" r="3.5" fill="none" stroke="#8a8b8e" stroke-width="2.4"/></svg>
<div class="a" style="left:32px;top:1405px;width:2180px;height:2px;background:#111214"></div>
<div class="a" style="left:32px;top:1426px;width:52px;height:52px;border-radius:12px;background:#36373b"></div>
<svg style="left:44px;top:1438px" width="28" height="28" viewBox="0 0 28 28"><path d="M2 2H26L16.5 13.5V26L11.5 23V13.5Z" fill="none" stroke="#f0f0f0" stroke-width="2.6" stroke-linejoin="round"/></svg>
<svg style="left:99px;top:1438px" width="30" height="29" viewBox="0 0 30 29"><path d="M0 4H12M0 14.5H12M0 25H12M22 28V2M15 9L22 2L29 9" fill="none" stroke="#c0c0c0" stroke-width="2.6"/></svg>
<div class="a" style="left:156px;top:1437px;width:2px;height:30px;background:#0d0e10"></div><div class="t" style="left:174px;top:1441px;font-size:24px;color:#a0a1a4">1 ảnh / Đã chọn 1</div>
<div class="a" style="left:382px;top:1437px;width:2px;height:30px;background:#0d0e10"></div><div class="t" style="left:400px;top:1441px;font-size:24px;letter-spacing:0.35px;color:#a0a1a4">Pet Masking7.jpg</div>
<div class="a" style="left:1300px;top:1426px;width:364px;height:52px;border-radius:26px;background:#151618"></div>
<svg style="left:1320px;top:1440px" width="24" height="24" viewBox="0 0 24 24"><path d="M2 23V1" stroke="#4d4e52" stroke-width="2.2"/><rect x="2" y="2" width="21" height="14" fill="#4d4e52"/><path d="M7 8.5L11 12L18 5" fill="none" stroke="#151618" stroke-width="2.2"/></svg>
<svg style="left:1356px;top:1440px" width="24" height="24" viewBox="0 0 24 24"><path d="M2 23V1" stroke="#4d4e52" stroke-width="2.2"/><rect x="2" y="2" width="21" height="14" fill="#4d4e52"/><path d="M8.5 4.5L16.5 12.5M16.5 4.5L8.5 12.5" fill="none" stroke="#151618" stroke-width="2.2"/></svg>
<div class="a" style="left:1396px;top:1436px;width:2px;height:32px;background:#2e2f33"></div>
<svg style="left:1415px;top:1439px" width="26" height="25" viewBox="0 0 26 25"><path d="M13 1.2l3.5 7.6 8.2.9-6.1 5.6 1.7 8.1L13 19.3l-7.3 4.1 1.7-8.1L1.3 9.7l8.2-.9z" fill="#5e5f62" stroke="#5e5f62" stroke-width="1.6" stroke-linejoin="round"/></svg>
<svg style="left:1451px;top:1439px" width="26" height="25" viewBox="0 0 26 25"><path d="M13 1.2l3.5 7.6 8.2.9-6.1 5.6 1.7 8.1L13 19.3l-7.3 4.1 1.7-8.1L1.3 9.7l8.2-.9z" fill="#5e5f62" stroke="#5e5f62" stroke-width="1.6" stroke-linejoin="round"/></svg>
<svg style="left:1488px;top:1439px" width="26" height="25" viewBox="0 0 26 25"><path d="M13 1.2l3.5 7.6 8.2.9-6.1 5.6 1.7 8.1L13 19.3l-7.3 4.1 1.7-8.1L1.3 9.7l8.2-.9z" fill="#5e5f62" stroke="#5e5f62" stroke-width="1.6" stroke-linejoin="round"/></svg>
<svg style="left:1524px;top:1439px" width="26" height="25" viewBox="0 0 26 25"><path d="M13 1.2l3.5 7.6 8.2.9-6.1 5.6 1.7 8.1L13 19.3l-7.3 4.1 1.7-8.1L1.3 9.7l8.2-.9z" fill="#5e5f62" stroke="#5e5f62" stroke-width="1.6" stroke-linejoin="round"/></svg>
<svg style="left:1560px;top:1439px" width="26" height="25" viewBox="0 0 26 25"><path d="M13 1.2l3.5 7.6 8.2.9-6.1 5.6 1.7 8.1L13 19.3l-7.3 4.1 1.7-8.1L1.3 9.7l8.2-.9z" fill="#5e5f62" stroke="#5e5f62" stroke-width="1.6" stroke-linejoin="round"/></svg>
<div class="a" style="left:1606px;top:1436px;width:2px;height:32px;background:#2e2f33"></div>
<div class="a" style="left:1623px;top:1441px;width:22px;height:22px;border-radius:50%;background:#46474b"></div>
<div class="a" style="left:1680px;top:1436px;width:2px;height:32px;background:#0d0e10"></div><div class="a" style="left:1702px;top:1426px;width:323px;height:52px;border-radius:10px;border:2px solid #48494d;background:#212527;overflow:hidden"><div class="a" style="left:0;top:0;width:186px;height:48px;background:#36373b"></div></div>
<div class="t" style="left:1718px;top:1441px;font-size:24px;letter-spacing:-0.5px;font-weight:bold;color:#a8a9ac">Phù hợp</div>
<div class="a" style="left:1828px;top:1445px;width:2px;height:21px;background:#1a1b1d"></div>
<div class="t" style="left:1843px;top:1441px;font-size:24px;letter-spacing:-1.5px;font-weight:bold;color:#a8a9ac">1:1</div>
<div class="t" style="left:1915px;top:1441px;font-size:24px;font-weight:bold;color:#ffffff">27%</div>
<svg style="left:1988px;top:1445px" width="24" height="14" viewBox="0 0 24 14"><path d="M1.5 1.5L12 12L22.5 1.5" fill="none" stroke="#f0f0f0" stroke-width="2.6"/></svg>
<div class="a" style="left:2042px;top:1436px;width:2px;height:32px;background:#0d0e10"></div><div class="a" style="left:2064px;top:1424px;width:56px;height:56px;border-radius:12px;background:#36373b"></div>
<div class="a" style="left:2078px;top:1438px;width:28px;height:28px;border-radius:4px;background:#ffffff"></div>
<div class="a" style="left:2136px;top:1438px;width:16px;height:28px;background:#ffffff"></div>
<div class="a" style="left:2152px;top:1438px;width:16px;height:28px;background:#9a9b9e"></div>
<div class="t" style="left:2137px;top:1442px;font-size:23px;color:#111">B</div>
<div class="t" style="left:2153px;top:1442px;font-size:23px;color:#111">A</div>
<svg style="left:2184px;top:1446px" width="23" height="13" viewBox="0 0 23 13"><path d="M1.5 1.5L11.5 11.5L21.5 1.5" fill="none" stroke="#b0b0b0" stroke-width="2.4"/></svg>
<div class="a" style="left:38px;top:1496px;width:140px;height:141px;border-radius:6px;border:3px solid #f5d020;background:#000"></div>
<div class="a" style="left:42px;top:1500px;width:132px;height:133px;border-radius:3px;background:#2e2f33"></div>
<div class="a" style="left:42px;top:1500px;width:20px;height:21px;border-radius:3px 0 6px 0;background:#151618"></div>
<svg style="left:46px;top:1504px" width="13" height="13" viewBox="0 0 13 13"><path d="M1 12L2 8.5L8.5 2L11 4.5L4.5 11Z" fill="#e0e0e0"/></svg>
<!--THUMB-->


<!-- thumbnail (filmstrip) -->
<svg style="left:46px;top:1524px" width="124" height="81" viewBox="0 0 124 81">
<defs><radialGradient id="tbg" cx="0.5" cy="0.72" r="0.75"><stop offset="0" stop-color="#bdbdbd"/><stop offset="0.6" stop-color="#a8a8a8"/><stop offset="1" stop-color="#8c8c8c"/></radialGradient>
<clipPath id="tclip"><rect width="124" height="81" rx="3"/></clipPath></defs>
<g clip-path="url(#tclip)"><rect width="124" height="81" fill="url(#tbg)"/>
<g transform="scale(0.0759 0.0744) translate(-382 -169)">
<use href="#dogp" fill="#3a2a22"/>
<g clip-path="url(#dog)">
<path d="M1192.0 408.9 C1190.1 396.6 1192.2 386.3 1194.6 378.4 C1197.0 370.6 1201.4 365.6 1206.3 361.7 C1211.2 357.7 1217.7 355.7 1224.1 354.6 C1230.4 353.4 1235.2 352.5 1244.4 354.6 C1253.5 356.6 1266.8 360.1 1278.9 366.8 C1291.0 373.4 1309.3 385.9 1317.0 394.2 C1324.8 402.5 1323.4 403.5 1325.7 416.5 C1328.0 429.6 1331.6 448.7 1330.8 472.4 C1329.9 496.2 1328.2 545.7 1320.6 558.8 C1313.0 572.0 1296.0 554.6 1285.0 551.2 C1274.0 547.8 1263.9 546.6 1254.5 538.5 C1245.2 530.5 1237.2 517.3 1229.1 502.9 C1221.1 488.5 1212.5 467.8 1206.3 452.1 C1200.1 436.5 1194.0 421.2 1192.0 408.9Z" fill="#b07a60"/><path d="M1549.3 406.4 C1548.7 396.7 1560.1 386.6 1566.0 378.9 C1572.0 371.3 1578.3 365.4 1584.8 360.7 C1591.4 355.9 1598.4 352.5 1605.2 350.5 C1611.9 348.5 1619.4 346.3 1625.5 348.5 C1631.6 350.6 1637.9 355.2 1641.8 363.2 C1645.7 371.2 1648.6 382.2 1648.9 396.2 C1649.1 410.2 1647.6 431.8 1643.3 447.0 C1639.0 462.3 1630.2 480.1 1623.0 487.7 C1615.8 495.3 1609.0 501.2 1600.1 492.8 C1591.2 484.3 1578.1 451.3 1569.6 436.9 C1561.1 422.5 1549.9 416.0 1549.3 406.4Z" fill="#b07a60"/>
<path d="M1335.8 543.6 C1344.3 533.4 1368.0 536.0 1381.6 543.6 C1395.1 551.2 1408.7 572.4 1417.2 589.3 C1425.6 606.3 1434.9 631.7 1432.4 645.2 C1429.9 658.8 1413.8 669.8 1401.9 670.6 C1390.1 671.5 1373.1 661.3 1361.3 650.3 C1349.4 639.3 1335.0 622.4 1330.8 604.6 C1326.5 586.8 1327.4 553.8 1335.8 543.6Z" fill="#a86e4a"/><path d="M1346.0 797.7 C1349.4 784.1 1374.0 770.6 1391.7 767.2 C1409.5 763.8 1437.5 768.9 1452.7 777.3 C1468.0 785.8 1479.8 804.4 1483.2 818.0 C1486.6 831.5 1483.2 850.2 1473.0 858.6 C1462.9 867.1 1439.2 870.5 1422.2 868.8 C1405.3 867.1 1384.1 860.3 1371.4 848.5 C1358.7 836.6 1342.6 811.2 1346.0 797.7Z" fill="#b07a5a"/><path d="M1295.2 924.7 C1315.5 914.5 1375.7 923.9 1422.2 929.8 C1468.8 935.7 1532.3 951.8 1574.7 960.3 C1617.0 968.7 1656.8 970.4 1676.3 980.6 C1695.8 990.8 1700.0 1011.9 1691.6 1021.3 C1683.1 1030.6 1653.4 1037.3 1625.5 1036.5 C1597.5 1035.7 1562.0 1022.1 1523.9 1016.2 C1485.8 1010.2 1434.1 1005.2 1396.8 1000.9 C1359.6 996.7 1317.2 1003.5 1300.3 990.8 C1283.3 978.1 1274.9 934.9 1295.2 924.7Z" fill="#a8744a"/><path d="M726.1 823.1 C738.8 818.0 775.2 833.2 787.0 848.5 C798.9 863.7 796.4 893.4 797.2 914.5 C798.0 935.7 798.0 962.0 792.1 975.5 C786.2 989.1 775.2 993.3 761.6 995.8 C748.1 998.4 721.8 996.7 710.8 990.8 C699.8 984.8 695.6 978.9 695.6 960.3 C695.6 941.6 705.7 901.8 710.8 879.0 C715.9 856.1 713.4 828.2 726.1 823.1Z" fill="#9a6a44"/><path d="M761.6 843.4 C772.6 840.9 807.4 857.8 837.9 858.6 C868.3 859.5 916.6 847.6 944.6 848.5 C972.5 849.3 997.9 855.3 1005.5 863.7 C1013.2 872.2 1007.2 891.7 990.3 899.3 C973.4 906.9 933.6 911.2 903.9 909.5 C874.3 907.8 834.5 895.1 812.4 889.1 C790.4 883.2 780.3 881.5 771.8 873.9 C763.3 866.3 750.6 845.9 761.6 843.4Z" fill="#8a5a44"/>
<ellipse cx="1500" cy="660" rx="55" ry="22" fill="#b8403a"/>
</g></g></g>
</svg>


<!-- ============ RIGHT PANEL ============ -->
<div class="a" style="left:2244px;top:100px;width:600px;height:1576px;border-radius:30px;background:#212527"></div>
<!-- header -->
<svg style="left:2277px;top:128px" width="31" height="30" viewBox="0 0 31 30"><circle cx="4.5" cy="4.5" r="4" fill="#f2f2f2"/><path d="M11 4.5H28.5M1.5 25H20" stroke="#f2f2f2" stroke-width="2.6" stroke-linecap="round"/><circle cx="25.5" cy="25" r="4.3" fill="#f2f2f2"/></svg>
<div class="t" style="left:2324px;top:131px;font-size:27px;font-weight:bold;color:#f4f4f4">Điều chỉnh màu</div>
<div class="a" style="left:2722px;top:125px;width:2px;height:33px;background:#0f1012"></div>
<svg style="left:2741px;top:130px" width="30" height="25" viewBox="0 0 30 25"><rect x="1.2" y="1.2" width="27.6" height="22.6" rx="2.5" fill="none" stroke="#b8b9bc" stroke-width="2.2"/><path d="M12.5 1.5V23.5M4.5 7H9M4.5 11.5H9" stroke="#b8b9bc" stroke-width="2.2"/></svg>
<svg style="left:2784px;top:134px" width="23" height="13" viewBox="0 0 23 13"><path d="M1.5 1.5L11.5 11.5L21.5 1.5" fill="none" stroke="#b8b9bc" stroke-width="2.4"/></svg>
<div class="a" style="left:2244px;top:185px;width:600px;height:3px;background:#141517"></div>
<!-- Bieu do -->
<svg style="left:2278px;top:228px" width="21" height="14" viewBox="0 0 21 14"><path d="M0 0H21L10.5 14Z" fill="#f4f4f4"/></svg>
<div class="t" style="left:2312px;top:221px;font-size:26px;font-weight:bold;color:#f4f4f4">Biểu đồ</div>


<!-- histogram -->
<div class="a" style="left:2276px;top:278px;width:536px;height:183px;border-radius:13px;background:#17181a;overflow:hidden">
<div class="a" style="left:0;top:0;width:536px;height:139px;background:linear-gradient(#000 0%,#0a0a0b 45%,#252628 100%)"></div>
<svg style="left:0;top:0" width="536" height="139" viewBox="0 0 536 139">
<defs><clipPath id="gclip"><polygon points="0.0,139.0 0.0,17.3 3.5,0.0 4.9,0.0 7.8,40.4 11.5,62.0 15.9,69.2 20.2,62.0 24.5,40.4 30.3,26.0 34.6,11.5 36.6,0.0 67.8,0.0 72.1,51.9 76.4,103.8 82.2,125.5 90.9,129.8 105.3,131.2 145.7,132.7 203.3,134.1 232.2,135.6 289.9,137.9 347.6,139.0 535.6,139.0"/></clipPath></defs>
<polygon points="0.0,139.0 38.9,136.1 64.9,126.3 76.4,123.4 88.0,122.9 99.5,124.6 116.8,127.5 145.7,131.2 174.5,134.1 203.3,134.1 232.2,132.7 246.6,124.0 255.3,121.1 263.9,113.9 269.7,111.9 272.6,116.8 289.9,112.5 301.4,105.3 315.8,101.0 327.4,98.1 341.8,92.3 347.6,88.0 359.1,80.8 367.8,75.0 373.5,66.3 377.8,59.1 382.2,47.6 385.1,46.1 389.4,54.8 393.7,53.4 398.0,69.2 402.4,92.3 408.1,95.2 412.5,86.5 416.8,76.4 421.1,109.6 425.4,106.7 431.2,77.9 434.1,75.0 437.6,50.5 441.3,75.0 445.6,121.1 451.4,125.5 457.2,129.8 461.5,139.0 535.6,139.0" fill="#5a2222"/>
<polygon points="0.0,139.0 0.0,17.3 3.5,0.0 4.9,0.0 7.8,40.4 11.5,62.0 15.9,69.2 20.2,62.0 24.5,40.4 30.3,26.0 34.6,11.5 36.6,0.0 67.8,0.0 72.1,51.9 76.4,103.8 82.2,125.5 90.9,129.8 105.3,131.2 145.7,132.7 203.3,134.1 232.2,135.6 289.9,137.9 347.6,139.0 535.6,139.0" fill="#1e4a26"/>
<polygon points="0.0,139.0 0.0,118.3 4.3,124.0 13.0,122.6 18.7,103.8 24.5,69.2 30.3,51.9 36.1,54.8 43.3,66.3 47.6,67.8 51.9,40.4 56.8,0.6 85.1,0.6 88.0,75.0 90.9,109.6 96.6,125.5 105.3,131.2 145.7,134.1 203.3,137.0 261.0,138.4 535.6,139.0" fill="#1c2c78"/>
<polygon points="0.0,139.0 0.0,118.3 4.3,124.0 13.0,122.6 18.7,103.8 24.5,69.2 30.3,51.9 36.1,54.8 43.3,66.3 47.6,67.8 51.9,40.4 56.8,0.6 85.1,0.6 88.0,75.0 90.9,109.6 96.6,125.5 105.3,131.2 145.7,134.1 203.3,137.0 261.0,138.4 535.6,139.0" fill="#235676" clip-path="url(#gclip)"/>
<polygon points="0.0,139.0 38.9,136.1 64.9,126.3 76.4,123.4 88.0,122.9 99.5,124.6 116.8,127.5 145.7,131.2 174.5,134.1 203.3,134.1 232.2,132.7 246.6,124.0 255.3,121.1 263.9,113.9 269.7,111.9 272.6,116.8 289.9,112.5 301.4,105.3 315.8,101.0 327.4,98.1 341.8,92.3 347.6,88.0 359.1,80.8 367.8,75.0 373.5,66.3 377.8,59.1 382.2,47.6 385.1,46.1 389.4,54.8 393.7,53.4 398.0,69.2 402.4,92.3 408.1,95.2 412.5,86.5 416.8,76.4 421.1,109.6 425.4,106.7 431.2,77.9 434.1,75.0 437.6,50.5 441.3,75.0 445.6,121.1 451.4,125.5 457.2,129.8 461.5,139.0 535.6,139.0" fill="#6a4a60" fill-opacity="0.35" clip-path="url(#gclip)"/>
<polyline points="0.0,139.0 38.9,136.1 64.9,126.3 76.4,123.4 88.0,122.9 99.5,124.6 116.8,127.5 145.7,131.2 174.5,134.1 203.3,134.1 232.2,132.7 246.6,124.0 255.3,121.1 263.9,113.9 269.7,111.9 272.6,116.8 289.9,112.5 301.4,105.3 315.8,101.0 327.4,98.1 341.8,92.3 347.6,88.0 359.1,80.8 367.8,75.0 373.5,66.3 377.8,59.1 382.2,47.6 385.1,46.1 389.4,54.8 393.7,53.4 398.0,69.2 402.4,92.3 408.1,95.2 412.5,86.5 416.8,76.4 421.1,109.6 425.4,106.7 431.2,77.9 434.1,75.0 437.6,50.5 441.3,75.0 445.6,121.1 451.4,125.5 457.2,129.8 461.5,139.0" fill="none" stroke="#d03535" stroke-width="1.3"/>
<polyline points="0.0,17.3 3.5,0.0 4.9,0.0 7.8,40.4 11.5,62.0 15.9,69.2 20.2,62.0 24.5,40.4 30.3,26.0 34.6,11.5 36.6,0.0 67.8,0.0 72.1,51.9 76.4,103.8 82.2,125.5 90.9,129.8 105.3,131.2 145.7,132.7 203.3,134.1 232.2,135.6 289.9,137.9 347.6,139.0" fill="none" stroke="#48c048" stroke-width="1.3"/>
<polyline points="0.0,118.3 4.3,124.0 13.0,122.6 18.7,103.8 24.5,69.2 30.3,51.9 36.1,54.8 43.3,66.3 47.6,67.8 51.9,40.4 56.8,0.6 85.1,0.6 88.0,75.0 90.9,109.6 96.6,125.5 105.3,131.2 145.7,134.1 203.3,137.0 261.0,138.4" fill="none" stroke="#3b66f0" stroke-width="1.3"/>
<path d="M0 138H536" stroke="#3a6fd8" stroke-width="2"/>
</svg>
</div>
<div class="t" style="left:2292px;top:429px;font-size:23px;color:#a8a9ac">ISO 0</div>
<div class="t" style="left:2413px;top:429px;font-size:23px;color:#a8a9ac">0mm</div>
<div class="t" style="left:2524px;top:429px;font-size:23px;color:#a8a9ac">f/0.0</div>
<div class="t" style="left:2637px;top:429px;font-size:23px;color:#a8a9ac">1/0s</div>
<div class="a" style="left:2748px;top:428px;width:47px;height:23px;border-radius:4px;background:#2c2d30"></div>
<div class="t" style="left:2748px;top:432px;width:47px;text-align:center;font-size:16px;color:#d0d0d0">JPG</div>
<!-- rgb -->
<div class="a" style="left:2276px;top:470px;width:536px;height:91px;border-radius:14px;background:#17181a"></div>
<div class="t" style="left:2308px;top:485.5px;font-size:22px;color:#b8b9bc">R -</div>
<div class="t" style="left:2502px;top:485.5px;font-size:22px;color:#b8b9bc">G -</div>
<div class="t" style="left:2694px;top:485.5px;font-size:22px;color:#b8b9bc">B -</div>
<div class="t" style="left:2308px;top:527.5px;font-size:22px;color:#b8b9bc">L -</div>
<div class="t" style="left:2502px;top:527.5px;font-size:22px;color:#b8b9bc">a -</div>
<div class="t" style="left:2694px;top:527.5px;font-size:22px;color:#b8b9bc">b -</div>
<div class="a" style="left:2790px;top:504px;width:4.5px;height:4.5px;border-radius:50%;background:#a0a1a4"></div>
<div class="a" style="left:2790px;top:514px;width:4.5px;height:4.5px;border-radius:50%;background:#a0a1a4"></div>
<div class="a" style="left:2790px;top:524px;width:4.5px;height:4.5px;border-radius:50%;background:#a0a1a4"></div>
<div class="a" style="left:2244px;top:581px;width:600px;height:2px;background:#141517"></div>


<!-- realtime -->
<div class="t" style="left:2276px;top:610px;font-size:24px;letter-spacing:0.45px;color:#c4c5c8">Chế độ chỉnh màu thời gian thực</div>
<svg style="left:2647px;top:608px" width="25" height="25" viewBox="0 0 25 25"><circle cx="12.5" cy="12.5" r="11" fill="none" stroke="#a0a1a4" stroke-width="1.8"/><path d="M9 9.5a3.5 3.5 0 1 1 5 3.2c-1 .5-1.5 1.2-1.5 2.3V16" fill="none" stroke="#a0a1a4" stroke-width="1.8"/><circle cx="12.5" cy="19" r="1.2" fill="#a0a1a4"/></svg>
<div class="a" style="left:2756px;top:605px;width:55px;height:31px;border-radius:15.5px;background:#3e3f43"></div>
<div class="a" style="left:2758px;top:607px;width:27px;height:27px;border-radius:50%;background:#c4c5c8"></div>
<div class="a" style="left:2244px;top:655px;width:600px;height:2px;background:#141517"></div>
<!-- segmented -->
<div class="a" style="left:2276px;top:672px;width:536px;height:56px;border-radius:14px;background:#17181a"></div>
<div class="a" style="left:2546px;top:677px;width:261px;height:46px;border-radius:11px;background:#3a3b3f"></div>
<div class="t" style="left:2276px;top:687.5px;width:268px;text-align:center;font-size:24.3px;font-weight:bold;color:#a9aaad">Ảnh đầy đủ</div>
<div class="t" style="left:2546px;top:687.5px;width:261px;text-align:center;font-size:24.3px;font-weight:bold;color:#f4f4f4">Màu bộ phận</div>
<div class="a" style="left:2542px;top:661px;width:266px;height:75px;border:3px solid #e5432b"></div>
<!-- chips -->
<div class="a" style="left:2276px;top:760px;width:102px;height:43px;border-radius:12px;background:#36373b"></div>
<div class="t" style="left:2276px;top:771px;width:102px;text-align:center;font-size:24px;font-weight:bold;color:#d8d8d8">Người</div>
<div class="a" style="left:2386px;top:760px;width:142px;height:43px;border-radius:12px;background:#36373b;border:2px solid #bfc0c3"></div>
<div class="t" style="left:2386px;top:771px;width:142px;text-align:center;font-size:24px;font-weight:bold;color:#f4f4f4">Thú cưng</div>
<div class="a" style="left:2539px;top:760px;width:153px;height:43px;border-radius:12px;background:#36373b"></div>
<div class="t" style="left:2539px;top:771px;width:153px;text-align:center;font-size:24px;font-weight:bold;color:#d8d8d8">Phông nền</div>
<div class="a" style="left:2380px;top:750px;width:159px;height:64px;border:3px solid #e5432b"></div>
<div class="a" style="left:2276px;top:812px;width:145px;height:43px;border-radius:12px;background:#36373b"></div>
<div class="t" style="left:2276px;top:822px;width:145px;text-align:center;font-size:24px;font-weight:bold;color:#d8d8d8">Tuỳ chỉnh</div>
<!-- scrollbar -->
<div class="a" style="left:2828px;top:829px;width:12px;height:238px;border-radius:6px;background:#646568"></div>
<!-- card -->
<div class="a" style="left:2263px;top:876px;width:561px;height:371px;border-radius:20px;background:#1e1f23"></div>
<div class="a" style="left:2288px;top:900px;width:100px;height:100px;border-radius:50%;background:#36373b"></div>
<svg style="left:2320px;top:933px" width="36" height="33" viewBox="0 0 36 33"><ellipse cx="13" cy="5" rx="3.5" ry="4" fill="#d0d0d0"/><ellipse cx="23" cy="5" rx="3.5" ry="4" fill="#d0d0d0"/><ellipse cx="4" cy="13" rx="3.3" ry="3.8" fill="#d0d0d0"/><ellipse cx="32" cy="13" rx="3.3" ry="3.8" fill="#d0d0d0"/><path d="M18 13.5c-5 0-10.5 7-10.5 12c0 4 3 5.5 5.5 5.5c2 0 3.5-1 5-1s3 1 5 1c2.5 0 5.5-1.5 5.5-5.5c0-5-5.5-12-10.5-12Z" fill="none" stroke="#d0d0d0" stroke-width="3"/></svg>
<div class="a" style="left:2412px;top:900px;width:100px;height:100px;border-radius:50%;background:#c8c9cc"></div>
<!--CIRCLE-->
<div class="t" style="left:2304px;top:1012px;font-size:24px;color:#c4c5c8">Tất cả</div>
<div class="t" style="left:2448px;top:1012px;font-size:24px;color:#c4c5c8">#1</div>
<div class="t" style="left:2289px;top:1109px;font-size:24px;color:#c4c5c8">Thú cưng 1</div>
<div class="a" style="left:2634px;top:1104px;width:32px;height:32px;border-radius:50%;background:#3e3f43"></div>
<svg style="left:2641px;top:1111px" width="18" height="18" viewBox="0 0 18 18"><path d="M9 1V17M1 9H17" stroke="#d8d8d8" stroke-width="2.4"/></svg>
<div class="t" style="left:2674px;top:1109px;font-size:24px;color:#c4c5c8">Tạo mặt nạ</div>
<div class="a" style="left:2288px;top:1160px;width:299px;height:51px;border-radius:9px;background:#36373b;border:2px solid #a9aaad"></div>
<div class="t" style="left:2303px;top:1175px;font-size:24px;letter-spacing:0.4px;color:#c4c5c8">+Tổng thể thú cưng</div>
<div class="a" style="left:2538px;top:1175px;width:2px;height:23px;background:#141517"></div>
<svg style="left:2551px;top:1173px" width="26" height="26" viewBox="0 0 26 26"><path d="M1.5 8V3a1.5 1.5 0 0 1 1.5-1.5H8M1.5 18V23a1.5 1.5 0 0 0 1.5 1.5H8M24.5 18V23a1.5 1.5 0 0 1-1.5 1.5H18" fill="none" stroke="#a9aaad" stroke-width="2"/><path d="M6 20.5L7 15.5L18.5 4a2.5 2.5 0 0 1 3.5 3.5L10.5 19Z" fill="none" stroke="#a9aaad" stroke-width="2" stroke-linejoin="round"/></svg>
<!-- Co ban -->
<svg style="left:2278px;top:1302px" width="21" height="14" viewBox="0 0 21 14"><path d="M0 0H21L10.5 14Z" fill="#f4f4f4"/></svg>
<div class="t" style="left:2312px;top:1295px;font-size:26px;font-weight:bold;color:#f4f4f4">Cơ bản</div>
<div class="a" style="left:2412px;top:1296px;width:47px;height:24px;border-radius:5px;background:#131416"></div>
<div class="t" style="left:2412px;top:1300px;width:47px;text-align:center;font-size:16px;font-weight:bold;color:#c4a63a">Free</div>
<div class="t" style="left:2276px;top:1382px;font-size:26px;font-weight:bold;color:#f0f0f0">Cân bằng trắng</div>
<div class="t" style="left:2276px;top:1451.5px;font-size:23px;letter-spacing:0.5px;color:#a9aaad">Độ ấm</div>
<div class="t" style="left:2793px;top:1451.5px;font-size:23px;color:#a9aaad">0</div>
<div class="a" style="left:2276px;top:1496px;width:536px;height:5px;border-radius:3px;background:linear-gradient(90deg,#3a32b8 0%,#6a5fa8 25%,#8a8a90 47%,#8a8a88 53%,#b5b060 78%,#e8e050 100%)"></div>
<div class="a" style="left:2528px;top:1492px;width:32px;height:14px;background:#212527"></div>
<div class="a" style="left:2532px;top:1486px;width:25px;height:25px;border-radius:50%;background:#a9aaad"></div>
<div class="a" style="left:2296px;top:1553px;width:4px;height:2px;background:#ddd;transform:rotate(-30deg)"></div>
<!-- bottom buttons -->
<div class="a" style="left:2244px;top:1570px;width:600px;height:106px;border-radius:0 0 30px 30px;background:#212527"></div>
<div class="a" style="left:2272px;top:1588px;width:266px;height:56px;border-radius:28px;background:#5a5c5f"></div>
<div class="t" style="left:2272px;top:1603px;width:266px;text-align:center;font-size:26px;font-weight:bold;color:#ececec">Lưu cài sẵn mới</div>
<div class="a" style="left:2550px;top:1588px;width:266px;height:56px;border-radius:28px;background:#5a5c5f"></div>
<div class="a" style="left:2741px;top:1588px;width:2px;height:56px;background:#212527"></div>
<div class="t" style="left:2550px;top:1603px;width:191px;text-align:center;font-size:26px;font-weight:bold;color:#ececec">Đồng bộ</div>
<svg style="left:2767px;top:1602px" width="26" height="28" viewBox="0 0 26 28"><path d="M13 2L23.5 8V20L13 26L2.5 20V8Z" fill="none" stroke="#dcdcdc" stroke-width="2" stroke-linejoin="round"/><circle cx="13" cy="14" r="3.2" fill="none" stroke="#dcdcdc" stroke-width="2"/></svg>

<!-- circle pet thumb -->
<svg style="left:2416px;top:904px" width="92" height="92" viewBox="0 0 92 92">
<defs><clipPath id="pc"><circle cx="46" cy="46" r="46"/></clipPath><radialGradient id="pg" cx="0.5" cy="0.4" r="0.6"><stop offset="0" stop-color="#d02c28"/><stop offset="1" stop-color="#b41e1e"/></radialGradient></defs>
<g clip-path="url(#pc)"><rect width="92" height="92" fill="url(#pg)"/>
<g transform="translate(-50.7 -18.4) scale(0.08 0.09)">
<use href="#dogp" fill="#2e2418"/>
<g clip-path="url(#dog)">
<path d="M1192.0 408.9 C1190.1 396.6 1192.2 386.3 1194.6 378.4 C1197.0 370.6 1201.4 365.6 1206.3 361.7 C1211.2 357.7 1217.7 355.7 1224.1 354.6 C1230.4 353.4 1235.2 352.5 1244.4 354.6 C1253.5 356.6 1266.8 360.1 1278.9 366.8 C1291.0 373.4 1309.3 385.9 1317.0 394.2 C1324.8 402.5 1323.4 403.5 1325.7 416.5 C1328.0 429.6 1331.6 448.7 1330.8 472.4 C1329.9 496.2 1328.2 545.7 1320.6 558.8 C1313.0 572.0 1296.0 554.6 1285.0 551.2 C1274.0 547.8 1263.9 546.6 1254.5 538.5 C1245.2 530.5 1237.2 517.3 1229.1 502.9 C1221.1 488.5 1212.5 467.8 1206.3 452.1 C1200.1 436.5 1194.0 421.2 1192.0 408.9Z" fill="#a08060"/><path d="M1335.8 543.6 C1344.3 533.4 1368.0 536.0 1381.6 543.6 C1395.1 551.2 1408.7 572.4 1417.2 589.3 C1425.6 606.3 1434.9 631.7 1432.4 645.2 C1429.9 658.8 1413.8 669.8 1401.9 670.6 C1390.1 671.5 1373.1 661.3 1361.3 650.3 C1349.4 639.3 1335.0 622.4 1330.8 604.6 C1326.5 586.8 1327.4 553.8 1335.8 543.6Z" fill="#a07858"/><path d="M1346.0 797.7 C1349.4 784.1 1374.0 770.6 1391.7 767.2 C1409.5 763.8 1437.5 768.9 1452.7 777.3 C1468.0 785.8 1479.8 804.4 1483.2 818.0 C1486.6 831.5 1483.2 850.2 1473.0 858.6 C1462.9 867.1 1439.2 870.5 1422.2 868.8 C1405.3 867.1 1384.1 860.3 1371.4 848.5 C1358.7 836.6 1342.6 811.2 1346.0 797.7Z" fill="#b08a6a"/><path d="M1295.2 924.7 C1315.5 914.5 1375.7 923.9 1422.2 929.8 C1468.8 935.7 1532.3 951.8 1574.7 960.3 C1617.0 968.7 1656.8 970.4 1676.3 980.6 C1695.8 990.8 1700.0 1011.9 1691.6 1021.3 C1683.1 1030.6 1653.4 1037.3 1625.5 1036.5 C1597.5 1035.7 1562.0 1022.1 1523.9 1016.2 C1485.8 1010.2 1434.1 1005.2 1396.8 1000.9 C1359.6 996.7 1317.2 1003.5 1300.3 990.8 C1283.3 978.1 1274.9 934.9 1295.2 924.7Z" fill="#a88058"/><path d="M726.1 823.1 C738.8 818.0 775.2 833.2 787.0 848.5 C798.9 863.7 796.4 893.4 797.2 914.5 C798.0 935.7 798.0 962.0 792.1 975.5 C786.2 989.1 775.2 993.3 761.6 995.8 C748.1 998.4 721.8 996.7 710.8 990.8 C699.8 984.8 695.6 978.9 695.6 960.3 C695.6 941.6 705.7 901.8 710.8 879.0 C715.9 856.1 713.4 828.2 726.1 823.1Z" fill="#9a7050"/>
</g></g></g>
</svg>


<!-- ============ RIGHT ICON COLUMN ============ -->
<div class="a" style="left:2864px;top:124px;width:64px;height:64px;border-radius:13px;background:#2c2d30"></div>
<svg style="left:2875px;top:139px" width="43" height="34" viewBox="0 0 43 34"><path d="M21 1C9 1 1 7.5 1 15.5C1 22 6 26 10 26C13.5 26 14 28 13 30.5C12 33 14 34 17 33C24 31 42 27 42 16C42 7 33 1 21 1Z" fill="#fff"/><ellipse cx="9.5" cy="12" rx="3.6" ry="2.8" fill="#2c2d30"/><ellipse cx="18" cy="6.5" rx="3.4" ry="2.8" fill="#2c2d30"/><ellipse cx="28" cy="8" rx="3.3" ry="2.8" fill="#2c2d30"/><ellipse cx="34" cy="16" rx="3.3" ry="2.6" fill="#2c2d30"/></svg>
<svg style="left:2877px;top:247px" width="38" height="42" viewBox="0 0 38 42"><path d="M19 1C10.5 1 5.5 7 5.5 15.5C3 15.5 2 17 2.5 19C3 21 4.5 22 6 22.5C7.5 32 12.5 41 19 41C25.5 41 30.5 32 32 22.5C33.5 22 35 21 35.5 19C36 17 35 15.5 32.5 15.5C32.5 7 27.5 1 19 1Z" fill="#b9b9b9"/><path d="M15.5 33.5Q19 36 22.5 33.5" fill="none" stroke="#17181a" stroke-width="1.8" stroke-linecap="round"/></svg>
<svg style="left:2878px;top:362px" width="36" height="36" viewBox="0 0 36 36"><rect x="0" y="0" width="36" height="36" rx="2" fill="#b9b9b9"/><rect x="3" y="3" width="30" height="10" fill="#17181a"/><g fill="#17181a"><rect x="7.5" y="13" width="4.5" height="4.5"/><rect x="16" y="13" width="4.5" height="4.5"/><rect x="24.5" y="13" width="4.5" height="4.5"/><rect x="3" y="17.5" width="4.5" height="4.5"/><rect x="12" y="17.5" width="4.5" height="4.5"/><rect x="20.5" y="17.5" width="4.5" height="4.5"/><rect x="29" y="17.5" width="4" height="4.5"/><rect x="7.5" y="22" width="4.5" height="4.5"/><rect x="16" y="22" width="4.5" height="4.5"/><rect x="24.5" y="22" width="4.5" height="4.5"/><rect x="7.5" y="28" width="4.5" height="4.5"/><rect x="16" y="28" width="4.5" height="4.5"/><rect x="24.5" y="28" width="4.5" height="4.5"/></g></svg>
<svg style="left:2875px;top:473px" width="43" height="38" viewBox="0 0 43 38"><path d="M14 1C15.5 4 18.5 5.5 21.5 5.5S27.5 4 29 1L42 8L38 17L34 15V37H9V15L5 17L1 8Z" fill="#b9b9b9" stroke="#b9b9b9" stroke-width="1.5" stroke-linejoin="round"/></svg>
<svg style="left:2875px;top:576px" width="41" height="47" viewBox="0 0 41 47"><ellipse cx="14.5" cy="6.5" rx="5" ry="6" fill="#b9b9b9"/><ellipse cx="26.5" cy="6.5" rx="5" ry="6" fill="#b9b9b9"/><ellipse cx="4.5" cy="19" rx="4.3" ry="5.2" fill="#b9b9b9"/><ellipse cx="36.5" cy="19" rx="4.3" ry="5.2" fill="#b9b9b9"/><path d="M20.5 21C14 21 7 29 7 37C7 43 11 46 15 46C17.5 46 19 45 20.5 45S23.5 46 26 46C30 46 34 43 34 37C34 29 27 21 20.5 21Z" fill="#b9b9b9"/></svg>
<svg style="left:2873px;top:694px" width="46" height="45" viewBox="0 0 46 45"><path d="M8.5 0V36.5H45M1 8.5H37V45" fill="none" stroke="#b9b9b9" stroke-width="3"/><rect x="13.5" y="13.5" width="18" height="18" fill="#b9b9b9"/><path d="M16 29L29 16" stroke="#17181a" stroke-width="3.2" stroke-dasharray="3.2 1.5"/><rect x="39" y="2" width="4" height="4" fill="#b9b9b9"/><rect x="2" y="39" width="4" height="4" fill="#b9b9b9"/></svg>
<svg style="left:2875px;top:810px" width="41" height="36" viewBox="0 0 41 36"><path d="M13 1H28L30.5 6H39a1.5 1.5 0 0 1 1.5 1.5V34a1.5 1.5 0 0 1-1.5 1.5H2A1.5 1.5 0 0 1 .5 34V7.5A1.5 1.5 0 0 1 2 6H10.5Z" fill="#b9b9b9"/><circle cx="20.5" cy="20.5" r="8.5" fill="none" stroke="#17181a" stroke-width="2.6"/><circle cx="20.5" cy="20.5" r="4.8" fill="#17181a"/></svg>
<svg style="left:2875px;top:923px" width="43" height="34" viewBox="0 0 43 34"><path d="M1 2a2 2 0 0 1 2-2H14L18 4H38a2 2 0 0 1 2 2V19C35 18 29 20 24 26L22 30H3a2 2 0 0 1-2-2Z" fill="#b9b9b9"/><path d="M16 25.5C19.5 19.5 24.5 17 29.5 17S39.5 19.5 43 25.5C39.5 31.5 34.5 34 29.5 34S19.5 31.5 16 25.5Z" fill="#b9b9b9" stroke="#17181a" stroke-width="1.6"/><circle cx="29.5" cy="25.5" r="4.5" fill="#17181a"/></svg>
<div class="a" style="left:2862px;top:1584px;width:60px;height:60px;border-radius:50%;background:#545557"></div>
<div class="t" style="left:2862px;top:1596px;width:60px;text-align:center;font-size:36px;font-weight:bold;color:#e6e6e6">?</div>

</body></html>
